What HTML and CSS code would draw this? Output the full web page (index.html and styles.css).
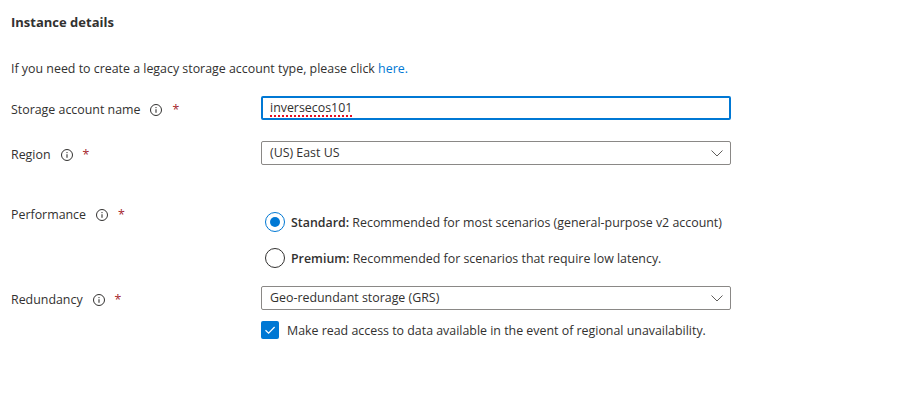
FILE: index.html
```html
<!DOCTYPE html>
<html lang="en">
<head>
<meta charset="utf-8">
<title>Instance details</title>
<link rel="stylesheet" href="styles.css">
</head>
<body>
<main class="page">
  <h2 class="heading">Instance details</h2>
  <p class="intro">If you need to create a legacy storage account type, please click <a class="link" href="#">here.</a></p>

  <div class="row row-name">
    <div class="label">Storage account name
      <svg class="info" viewBox="0 0 12 12" width="12" height="12"><circle cx="6" cy="6" r="5.5" fill="none" stroke="#323130" stroke-width="1"/><circle cx="6" cy="3.6" r="0.7" fill="#323130"/><path d="M6 5.2v3.6" stroke="#323130" stroke-width="1.1"/></svg>
      <span class="req">*</span>
    </div>
    <div class="control">
      <div class="textbox"><span class="spell">inversecos101</span></div>
    </div>
  </div>

  <div class="row row-region">
    <div class="label">Region
      <svg class="info" viewBox="0 0 12 12" width="12" height="12"><circle cx="6" cy="6" r="5.5" fill="none" stroke="#323130" stroke-width="1"/><circle cx="6" cy="3.6" r="0.7" fill="#323130"/><path d="M6 5.2v3.6" stroke="#323130" stroke-width="1.1"/></svg>
      <span class="req">*</span>
    </div>
    <div class="control">
      <div class="select"><span>(US) East US</span>
        <svg class="chev" viewBox="0 0 12 7" width="12" height="7"><path d="M0.5 0.5L6 6L11.5 0.5" fill="none" stroke="#605e5c" stroke-width="1"/></svg>
      </div>
    </div>
  </div>

  <div class="row row-perf">
    <div class="label label-top">Performance
      <svg class="info" viewBox="0 0 12 12" width="12" height="12"><circle cx="6" cy="6" r="5.5" fill="none" stroke="#323130" stroke-width="1"/><circle cx="6" cy="3.6" r="0.7" fill="#323130"/><path d="M6 5.2v3.6" stroke="#323130" stroke-width="1.1"/></svg>
      <span class="req">*</span>
    </div>
    <div class="control radios">
      <div class="radio-opt"><span class="radio checked"></span><span><b>Standard:</b> Recommended for most scenarios (general-purpose v2 account)</span></div>
      <div class="radio-opt"><span class="radio"></span><span><b>Premium:</b> Recommended for scenarios that require low latency.</span></div>
    </div>
  </div>

  <div class="row row-red">
    <div class="label">Redundancy
      <svg class="info" viewBox="0 0 12 12" width="12" height="12"><circle cx="6" cy="6" r="5.5" fill="none" stroke="#323130" stroke-width="1"/><circle cx="6" cy="3.6" r="0.7" fill="#323130"/><path d="M6 5.2v3.6" stroke="#323130" stroke-width="1.1"/></svg>
      <span class="req">*</span>
    </div>
    <div class="control">
      <div class="select"><span>Geo-redundant storage (GRS)</span>
        <svg class="chev" viewBox="0 0 12 7" width="12" height="7"><path d="M0.5 0.5L6 6L11.5 0.5" fill="none" stroke="#605e5c" stroke-width="1"/></svg>
      </div>
    </div>
  </div>

  <div class="row row-check">
    <div class="label"></div>
    <div class="control check-opt">
      <span class="checkbox"><svg viewBox="0 0 18 18" width="18" height="18"><path d="M4.5 9.2L7.6 12.2L13.6 6" fill="none" stroke="#fff" stroke-width="1.2"/></svg></span>
      <span>Make read access to data available in the event of regional unavailability.</span>
    </div>
  </div>
</main>
</body>
</html>
```

FILE: styles.css
```css
html, body {
  margin: 0;
  padding: 0;
  background: #ffffff;
}
body {
  font-family: "Segoe UI", "Open Sans", sans-serif;
  font-size: 12.4px;
  color: #323130;
}
.page {
  padding: 12px 0 0 11px;
  width: 720px;
}
.heading {
  margin: 0;
  font-size: 13px;
  font-weight: 700;
  line-height: 20px;
  color: #323130;
}
.intro {
  margin: 27px 0 0 0;
  line-height: 20px;
}
.link {
  color: #0078d4;
  text-decoration: none;
}
.row {
  display: flex;
  align-items: center;
}
.label {
  width: 250px;
  flex: none;
  display: flex;
  align-items: center;
  line-height: 20px;
  padding-top: 3px;
}
.label-top {
  align-self: flex-start;
  line-height: 24px;
  padding-top: 0;
}
.info {
  margin-left: 10px;
  flex: none;
}
.req {
  margin-left: 10px;
  color: #a4262c;
}
.control {
  width: 470px;
}
.row-name { margin-top: 17px; }
.row-region { margin-top: 21px; }
.row-perf { margin-top: 38px; }
.row-red { margin-top: 16px; }
.row-check { margin-top: 11px; }

.textbox {
  box-sizing: border-box;
  height: 24px;
  border: 2px solid #0078d4;
  border-radius: 2px;
  padding: 0 7px;
  line-height: 20px;
}
.spell {
  text-decoration: underline dotted #e81123;
  text-decoration-thickness: 2px;
  text-underline-offset: 3px;
}
.select {
  box-sizing: border-box;
  height: 24px;
  border: 1px solid #8a8886;
  border-radius: 2px;
  padding: 0 7px 0 8px;
  display: flex;
  align-items: center;
  justify-content: space-between;
  line-height: 22px;
}
.radios {
  padding-top: 7px;
  display: flex;
  flex-direction: column;
  gap: 12px;
}
.radio-opt {
  display: flex;
  align-items: center;
  height: 24px;
  gap: 6px;
  padding-left: 4px;
  white-space: nowrap;
}
.radio-opt b { font-weight: 600; }
.radio {
  box-sizing: border-box;
  width: 20px;
  height: 20px;
  border-radius: 50%;
  border: 1px solid #323130;
  flex: none;
  display: flex;
  align-items: center;
  justify-content: center;
}
.radio.checked {
  border-color: #0078d4;
}
.radio.checked::after {
  content: "";
  width: 10px;
  height: 10px;
  border-radius: 50%;
  background: #0078d4;
}
.check-opt {
  display: flex;
  align-items: center;
  gap: 8px;
  white-space: nowrap;
}
.checkbox {
  width: 18px;
  height: 18px;
  background: #0078d4;
  border-radius: 2px;
  flex: none;
  display: flex;
}
```
